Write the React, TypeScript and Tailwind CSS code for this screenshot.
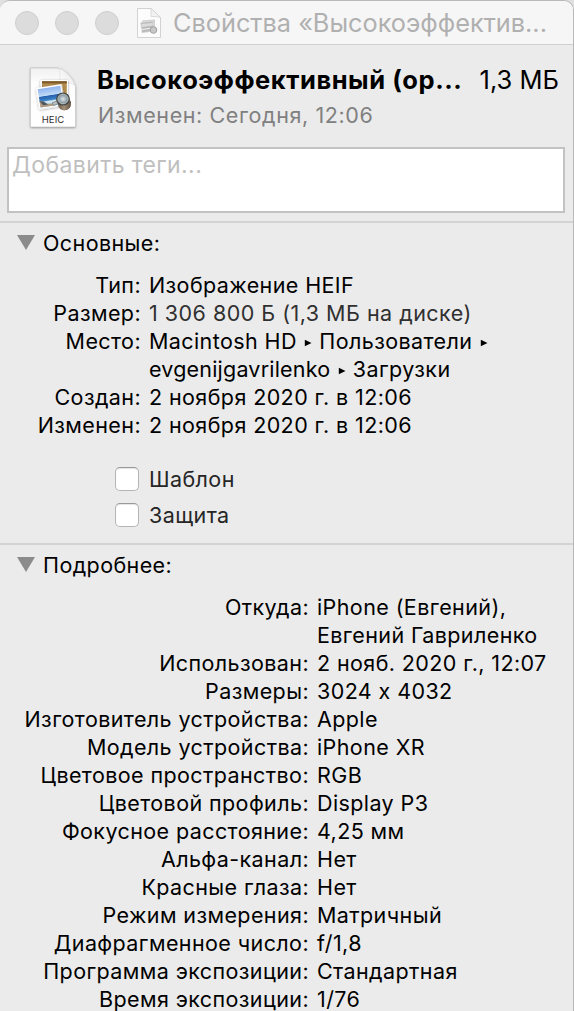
import type { ReactNode } from 'react'

interface Row {
  label: string
  value: ReactNode
  muted?: boolean
}

const Arrow = () => (
  <svg className="mr-[7px] ml-[7.5px] inline-block" width="8" height="8" viewBox="0 0 8 8">
    <path d="M0.8 0.8 L7.5 4 L0.8 7.2 Z" fill="#000" />
  </svg>
)

const general: Row[] = [
  { label: 'Тип:', value: 'Изображение HEIF' },
  { label: 'Размер:', value: '1 306 800 Б (1,3 МБ на диске)', muted: true },
  {
    label: 'Место:',
    value: (
      <>
        Macintosh HD<Arrow />Пользователи<Arrow />
        <br />
        <span className="tracking-[0.2px]">evgenijgavrilenko</span><Arrow />Загрузки
      </>
    ),
  },
  { label: 'Создан:', value: '2 ноября 2020 г. в 12:06' },
  { label: 'Изменен:', value: '2 ноября 2020 г. в 12:06' },
]

const details: Row[] = [
  { label: 'Откуда:', value: <>iPhone (Евгений),<br />Евгений Гавриленко</> },
  { label: 'Использован:', value: '2 нояб. 2020 г., 12:07' },
  { label: 'Размеры:', value: '3024 x 4032' },
  { label: 'Изготовитель устройства:', value: 'Apple' },
  { label: 'Модель устройства:', value: 'iPhone XR' },
  { label: 'Цветовое пространство:', value: 'RGB' },
  { label: 'Цветовой профиль:', value: 'Display P3' },
  { label: 'Фокусное расстояние:', value: '4,25 мм' },
  { label: 'Альфа-канал:', value: 'Нет' },
  { label: 'Красные глаза:', value: 'Нет' },
  { label: 'Режим измерения:', value: 'Матричный' },
  { label: 'Диафрагменное число:', value: 'f/1,8' },
  { label: 'Программа экспозиции:', value: 'Стандартная' },
  { label: 'Время экспозиции:', value: '1/76' },
]

function FileIcon() {
  return (
    <svg className="h-[66px] w-[50px] shrink-0" viewBox="0 0 50 66">
      <defs>
        <linearGradient id="page" x1="0" y1="0" x2="0" y2="1">
          <stop offset="0" stopColor="#f0f0f0" />
          <stop offset="0.25" stopColor="#fdfdfd" />
          <stop offset="1" stopColor="#fff" />
        </linearGradient>
        <linearGradient id="fold" x1="0" y1="1" x2="1" y2="0">
          <stop offset="0" stopColor="#fff" />
          <stop offset="0.5" stopColor="#f4f4f4" />
          <stop offset="1" stopColor="#d4d4d4" />
        </linearGradient>
        <linearGradient id="sea" x1="0" y1="0" x2="0" y2="1">
          <stop offset="0" stopColor="#8fb4ee" />
          <stop offset="0.4" stopColor="#c0dbf8" />
          <stop offset="0.44" stopColor="#2460b0" />
          <stop offset="0.66" stopColor="#3c83c4" />
          <stop offset="0.74" stopColor="#dcecf2" />
          <stop offset="1" stopColor="#8fc3da" />
        </linearGradient>
        <linearGradient id="body" x1="0" y1="0" x2="1" y2="0">
          <stop offset="0" stopColor="#5b4d3d" />
          <stop offset="0.5" stopColor="#a39078" />
          <stop offset="1" stopColor="#5d5040" />
        </linearGradient>
        <radialGradient id="lens">
          <stop offset="0" stopColor="#e4e6e5" />
          <stop offset="0.5" stopColor="#9fb0b8" />
          <stop offset="1" stopColor="#5d6869" />
        </radialGradient>
        <filter id="shadow" x="-20%" y="-20%" width="140%" height="140%">
          <feDropShadow dx="0" dy="0.7" stdDeviation="0.8" floodOpacity="0.45" />
        </filter>
      </defs>
      <path d="M2.5 3 H29 Q34 3.5 39 8 Q46 15 47.5 21 V62 H2.5 Z" fill="url(#page)" filter="url(#shadow)" />
      <path d="M2.5 3 H29 Q34 3.5 39 8 Q46 15 47.5 21 V62 H2.5 Z" fill="none" stroke="#bdbdbd" strokeWidth="0.6" />
      <path d="M30.5 3.5 Q33 7 31.5 17.5 Q41 16 47 20.5 Q45 14 39 8 Q34 3.5 30.5 3.5 Z" fill="url(#fold)" stroke="#d5d5d5" strokeWidth="0.5" />
      <g filter="url(#shadow)">
        <path d="M12.5 15 H40 V36 H12.5 Z" fill="#fff" />
        <path d="M14 16.2 H38.8 V34 H14 Z" fill="#b48d50" />
        <path d="M14 16.2 H38.8 V18.4 H14 Z" fill="#7d5c2c" />
      </g>
      <g transform="rotate(-9 22 32)">
        <rect x="9.5" y="21" width="26" height="21.5" fill="#fff" filter="url(#shadow)" />
        <rect x="11" y="22.5" width="23" height="18.5" fill="url(#sea)" />
        <path d="M11 34 L14 35 L17 38 L23 39 L25 41 H11 Z" fill="#b09a80" />
        <path d="M11 34.5 L15 35.5 L19 39 L14 39 Z" fill="#4c5661" />
      </g>
      <path d="M29 35 Q34 29 41 33.5 L43 37 Q43.5 45 36.5 45.5 Q31 45 30 40 Z" fill="url(#body)" />
      <path d="M24 38 L29.5 35.5 L31 38 L26 40.5 Z" fill="#b9c0c2" stroke="#555" strokeWidth="0.5" />
      <ellipse cx="35" cy="34" rx="6.3" ry="6" fill="url(#lens)" stroke="#454848" strokeWidth="1.2" />
      <ellipse cx="35" cy="34" rx="5" ry="4.7" fill="none" stroke="#c9cecd" strokeWidth="0.7" />
      <text x="25" y="58.3" textAnchor="middle" fontSize="9.5" fill="#2e2e2e" className="tracking-[0.1px]">HEIC</text>
    </svg>
  )
}

function ProxyIcon() {
  return (
    <svg className="h-[32px] w-[26px] shrink-0" viewBox="0 0 26 32">
      <path d="M1.5 1.5 H15 L24.5 10.5 V30.5 H1.5 Z" fill="#fcfcfc" stroke="#d2d2d2" />
      <path d="M15 1.5 V9.5 Q20 9 24.5 10.5 Z" fill="#f2f2f2" stroke="#d2d2d2" strokeWidth="0.8" />
      <path d="M6 13.5 L19 12.5 V23 L7 24 Z" fill="#cdcdcd" />
      <path d="M4.5 15.5 L17 14 L18.5 24 L6 26 Z" fill="#bababa" stroke="#e4e4e4" strokeWidth="0.7" />
      <path d="M5.5 17 L16.5 16 L17 18.5 L6 20 Z" fill="#dcdcdc" />
      <path d="M6 22.5 L17 21" stroke="#f0f0f0" strokeWidth="1.2" />
      <circle cx="17.5" cy="23" r="3.3" fill="#c8c8c8" stroke="#a0a0a0" />
    </svg>
  )
}

function Heading({ children }: { children: ReactNode }) {
  return (
    <div className="flex h-[28px] items-center pl-[17px]">
      <svg className="mr-[8px] mb-[2px]" width="18" height="15" viewBox="0 0 18 15">
        <path d="M0 0 H18 L9 15 Z" fill="#8b8b8b" />
      </svg>
      <span>{children}</span>
    </div>
  )
}

function Rows({ rows, labelClass }: { rows: Row[]; labelClass: string }) {
  return (
    <div>
      {rows.map((row) => (
        <div key={row.label} className="flex">
          <div className={`${labelClass} shrink-0 text-right`}>{row.label}</div>
          <div className={`pl-[8px] ${row.muted ? 'tracking-[0.48px] text-[#303030]' : ''}`}>{row.value}</div>
        </div>
      ))}
    </div>
  )
}

function Checkbox({ label }: { label: string }) {
  return (
    <label className="flex h-[36px] items-center">
      <span className="mr-[10px] size-[24px] rounded-[5px] border border-[#b5b5b5] border-t-[#999] bg-white shadow-[inset_0_1px_1px_#e4e4e4]" />
      <span className="text-[#262626]">{label}</span>
    </label>
  )
}

export default function App() {
  return (
    <div className="h-[1011px] w-[574px] overflow-hidden bg-[#e0e0e0]">
      <div className="h-[1040px] overflow-hidden rounded-t-[10px] border-t border-r border-[#b9b9b9] bg-[#ebebeb] font-['Inter','Liberation_Sans',sans-serif] text-[21.5px] leading-[28px] tracking-[0.4px] whitespace-nowrap text-black [font-feature-settings:'calt'_0]">
        {/* Title bar */}
        <div className="flex h-[44px] items-center border-b border-[#d0d0d0] bg-[#f6f6f6] pl-[15px]">
          <div className="flex gap-4">
            <span className="size-6 rounded-full border border-[#cecece] bg-[#dcdcdc]" />
            <span className="size-6 rounded-full border border-[#cecece] bg-[#dcdcdc]" />
            <span className="size-6 rounded-full border border-[#cecece] bg-[#dcdcdc]" />
          </div>
          <div className="ml-[17px] flex items-center">
            <ProxyIcon />
            <span className="ml-[11px] pt-px text-[25.3px] tracking-[0] text-[#b0b0b0]">Свойства «Высокоэффектив...</span>
          </div>
        </div>

        {/* Summary */}
        <div className="flex h-[102px] pt-[20px] pl-[28px]">
          <FileIcon />
          <div className="ml-[19px] flex-1 pr-[14px]">
            <div className="flex h-[30px] items-center justify-between text-[25.5px] tracking-[0]">
              <span className="font-bold tracking-[0.55px]">Высокоэффективный (op...</span>
              <span>1,3 МБ</span>
            </div>
            <div className="mt-[6px] pl-px tracking-[0.6px] text-[#808080]">Изменен: Сегодня, 12:06</div>
          </div>
        </div>

        <div className="mr-[8px] ml-[7px] h-[66px] border-2 border-[#c2c2c2] bg-white pt-[2px] pl-[3px] text-[23px] text-[#bfbfbf]">
          Добавить теги...
        </div>

        {/* General */}
        <div className="mt-[8px] border-t-2 border-[#d3d3d3] pt-[6px]">
          <Heading>Основные:</Heading>
          <div className="pt-[14px]">
            <Rows rows={general} labelClass="w-[141px]" />
          </div>
          <div className="mt-[22px] pl-[115px]">
            <Checkbox label="Шаблон" />
            <Checkbox label="Защита" />
          </div>
        </div>

        {/* More info */}
        <div className="mt-[10px] border-t-2 border-[#d3d3d3] pt-[6px]">
          <Heading>Подробнее:</Heading>
          <div className="pt-[14px]">
            <Rows rows={details} labelClass="w-[309px]" />
          </div>
        </div>
      </div>
    </div>
  )
}
